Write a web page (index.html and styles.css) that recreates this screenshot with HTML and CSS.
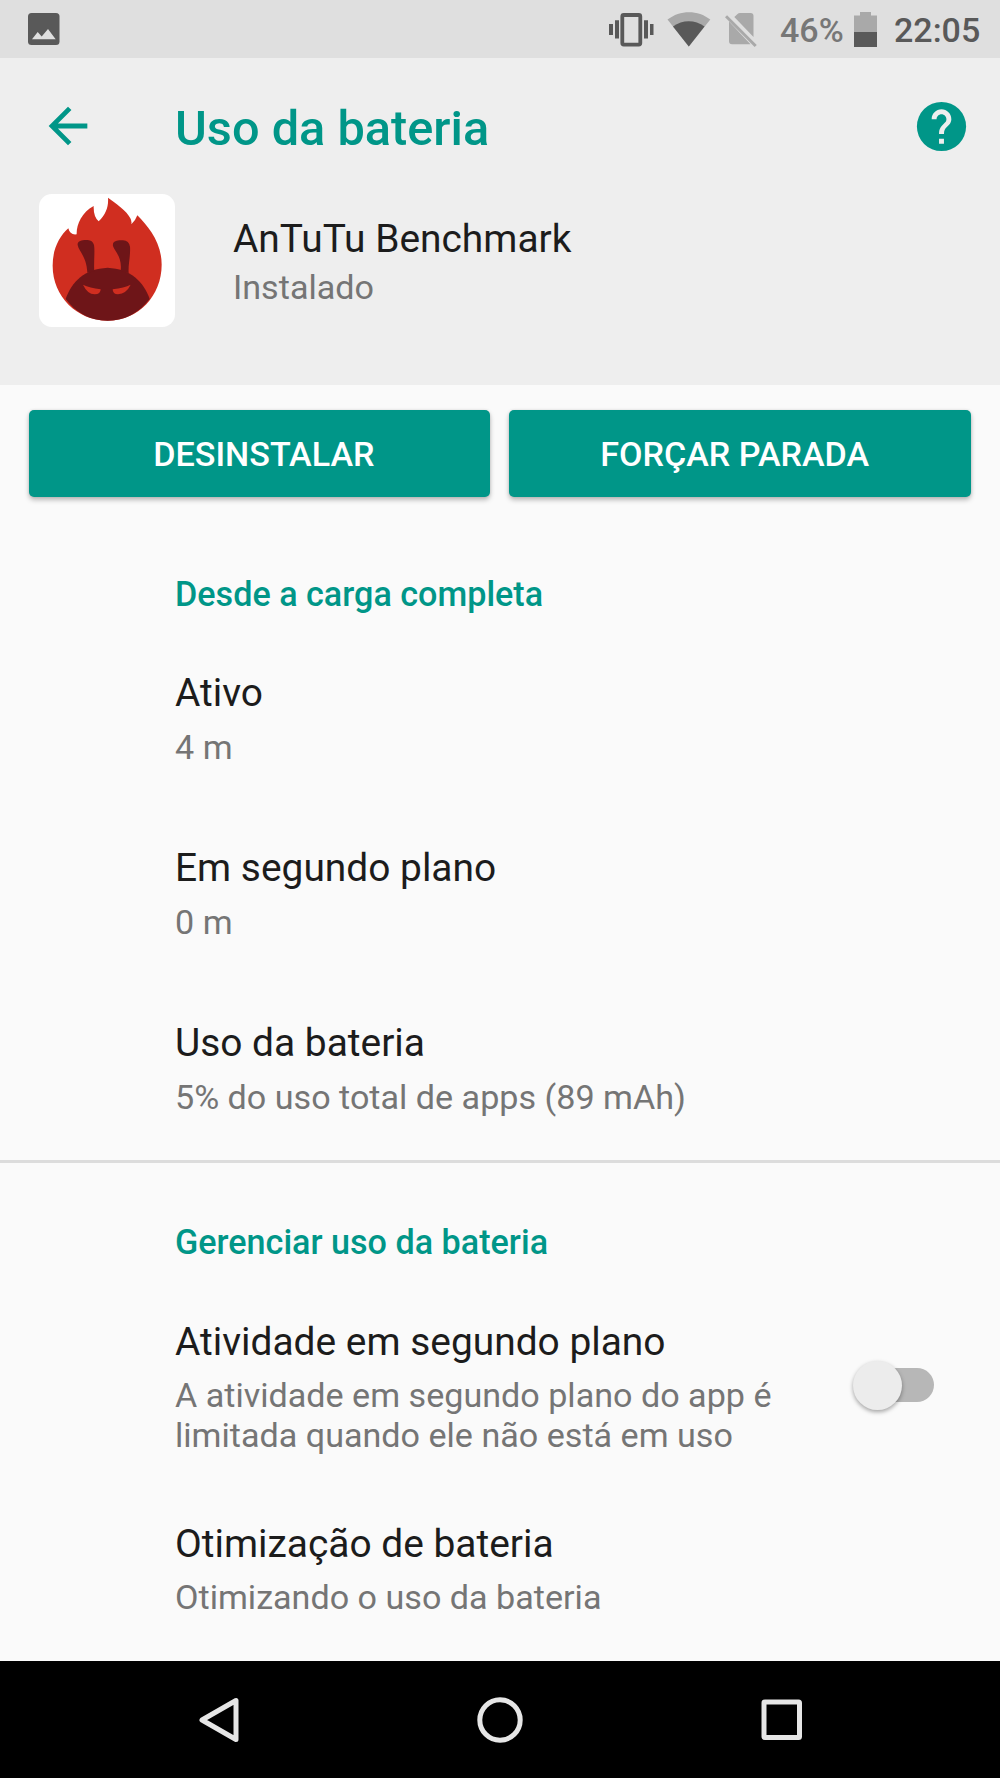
FILE: index.html
```html
<!DOCTYPE html>
<html lang="pt-BR">
<head>
  <meta charset="UTF-8">
  <meta name="viewport" content="width=device-width, initial-scale=1.0">
  <title>Uso da bateria</title>
  <link rel="stylesheet" href="styles.css">
</head>
<body>

  <div class="screen">

    <div class="status-bar">
      <svg class="status-picture" width="32" height="32" viewBox="0 0 32 32">
        <rect width="31.500" height="32" rx="3.500" fill="#595959"/>
        <path d="M4 26.300L9.700 19l4 4.600L20 16l7.700 10.300z" fill="#dfdfdf"/>
      </svg>
      <div class="status-icons">
        <svg class="status-vibrate" width="45" height="34" viewBox="0 0 45 34">
          <rect x="13.3" y="2" width="18" height="29.6" rx="1.5" fill="none" stroke="#595959" stroke-width="3.8"/>
          <path d="M0 11h4v11H0zM6 7.300h4v18.300H6zM35 7.300h4v18.300h-4zM41 11h3.500v11H41z" fill="#595959"/>
        </svg>
        <svg class="status-wifi" width="44" height="35" viewBox="0 0 44 35">
          <path d="M.5 7.500C13-2.300 31-2.300 43.300 7.500L21.800 34.500z" fill="#a9a9a9"/>
          <path d="M6 14.500C15.500 7.500 28 7.500 37.500 14.500L21.800 34.500z" fill="#595959"/>
        </svg>
        <!-- no sim: the gap beside the slash keeps the bar colour -->
        <svg class="status-sim" width="33" height="35" viewBox="0 0 33 35">
          <path d="M9.300 4L12.300 1.300Q13.500 0 15 0H25.500Q28.500 0 28.500 3V24zM4 8.500L25.500 31.300H7Q4 31.300 4 28.300z" fill="#a9a9a9"/>
          <path d="M1 3.200L30.700 33" stroke="#a9a9a9" stroke-width="3"/>
        </svg>
        <span class="status-percent">46%</span>
        <svg class="status-battery" width="23" height="35" viewBox="0 0 23 35">
          <path d="M0 3.500h6V0h11v3.500h6V20H0z" fill="#a9a9a9"/>
          <path d="M0 20h23v15H0z" fill="#595959"/>
        </svg>
        <span class="status-time">22:05</span>
      </div>
    </div>

    <div class="header">
      <div class="app-bar">
        <svg class="back" width="58" height="58" viewBox="0 0 24 24">
          <path d="M20 11H7.830l5.590-5.590L12 4l-8 8 8 8 1.410-1.410L7.830 13H20z" fill="#009688"/>
        </svg>
        <h1 class="app-bar-title">Uso da bateria</h1>
        <svg class="help" width="59" height="59" viewBox="0 0 24 24">
          <circle cx="12" cy="12" r="10" fill="#009688"/>
          <path d="M13 19h-2v-2h2zM15.070 11.250l-.9.920C13.450 12.900 13 13.500 13 15h-2v-.5c0-1.100.45-2.100 1.170-2.830l1.240-1.260c.37-.36.59-.86.59-1.410 0-1.100-.9-2-2-2s-2 .9-2 2H8c0-2.210 1.790-4 4-4s4 1.790 4 4c0 .88-.36 1.680-.93 2.250z" fill="#eee"/>
        </svg>
      </div>
      <div class="app-info">
        <svg class="app-logo" width="136" height="133" viewBox="0 0 408 399">
          <rect width="408" height="399" rx="38" fill="#fff"/>
          <g transform="translate(-2 0)">
            <path d="M209 11C229 26 267 51 276 73Q281 82 279 91Q291 81 297 64C330 98 370 145 370 212C370 305 300 380 208 380C115 380 42 305 43 214C43 165 63 127 90 103Q95 124 115 121C114 92 130 55 166 36Q165 68 181 82C203 61 211 38 209 11z" fill="#d02e20"/>
            <path d="M82 315C100 262 139 225 208 221C276 225 316 262 334 315C303 356 260 380 208 380C155 380 112 356 82 315z" fill="#6e1518"/>
            <path d="M147 236C145 187 121 172 118 153C116 139 138 137 152 139Q168 142 168 162C169 185 166 210 168 232zM247 230C252 188 229 173 224 156C221 139 241 138 254 139Q272 140 275 158C277 185 269 212 271 238z" fill="#6e1518"/>
            <path d="M134 272Q154 281 187 286Q187 301 169 301Q147 300 134 272zM277 272Q258 281 223 286Q223 301 239 301Q264 299 277 272z" fill="#d02e20"/>
          </g>
        </svg>
        <div class="app-text">
          <div class="item-title">AnTuTu Benchmark</div>
          <div class="item-summary">Instalado</div>
        </div>
      </div>
    </div>

    <div class="content">
      <div class="buttons">
        <button class="btn btn-uninstall">DESINSTALAR</button>
        <button class="btn btn-stop">FORÇAR PARADA</button>
      </div>

      <div class="section">
        <h2 class="section-title">Desde a carga completa</h2>
        <div class="item">
          <div class="item-title">Ativo</div>
          <div class="item-summary">4 m</div>
        </div>
        <div class="item">
          <div class="item-title">Em segundo plano</div>
          <div class="item-summary">0 m</div>
        </div>
        <div class="item">
          <div class="item-title">Uso da bateria</div>
          <div class="item-summary">5% do uso total de apps (89 mAh)</div>
        </div>
      </div>

      <div class="section section-manage">
        <h2 class="section-title">Gerenciar uso da bateria</h2>
        <div class="item item-with-switch">
          <div class="item-text">
            <div class="item-title">Atividade em segundo plano</div>
            <div class="item-summary">A atividade em segundo plano do app é limitada quando ele não está em uso</div>
          </div>
          <div class="switch"><div class="switch-thumb"></div></div>
        </div>
        <div class="item">
          <div class="item-title">Otimização de bateria</div>
          <div class="item-summary">Otimizando o uso da bateria</div>
        </div>
      </div>
    </div>

    <div class="nav-bar">
      <svg width="46" height="46" viewBox="0 0 46 46">
        <path d="M40 3.500v39L6 23z"/>
      </svg>
      <svg width="46" height="46" viewBox="0 0 46 46">
        <circle cx="23" cy="23" r="20.200"/>
      </svg>
      <svg width="46" height="46" viewBox="0 0 46 46">
        <rect x="5" y="5" width="35.500" height="35.500" rx="1"/>
      </svg>
    </div>

  </div>

</body>
</html>
```

FILE: styles.css
```css
* {
  box-sizing: border-box;
}
body {
  margin: 0;
  padding: 0;
  font-family: Roboto, sans-serif;
  background: #fafafa;
  color: #1c1c1c;
}
h1, h2 {
  margin: 0;
  font-weight: 500;
  color: #009688;
}
svg {
  display: block;
  flex-shrink: 0;
}

.screen {
  width: 1000px;
  height: 1778px;
  display: flex;
  flex-direction: column;
  overflow: hidden;
}

/* status bar */
.status-bar {
  height: 58px;
  flex-shrink: 0;
  display: flex;
  justify-content: space-between;
  align-items: center;
  padding: 0 19px 0 28px;
  background: #dfdfdf;
}
.status-icons {
  display: flex;
  align-items: center;
  font-size: 34px;
  font-weight: 500;
  line-height: 40px;
  color: #595959;
}
.status-vibrate {
  margin-top: 1px;
}
.status-wifi {
  margin-left: 13px;
}
.status-sim {
  margin-left: 14px;
  margin-top: 2px;
}
.status-percent {
  width: 64px;
  margin-left: 22px;
  margin-top: 2px;
  color: #777;
}
.status-battery {
  margin-left: 10px;
}
.status-time {
  width: 87px;
  margin-left: 17px;
  margin-top: 2px;
}

/* header */
.header {
  height: 327px;
  flex-shrink: 0;
  background: #eee;
}
.app-bar {
  height: 136px;
  display: flex;
  align-items: center;
  padding: 0 29px 0 39px;
}
.app-bar-title {
  flex: 1;
  margin-left: 78px;
  padding-top: 5px;
  font-size: 48.7px;
  line-height: 58px;
}
.app-info {
  display: flex;
  padding-left: 39px;
}
.app-text {
  padding-top: 22px;
  margin-left: 58px;
}
.app-text .item-summary {
  margin-top: 5px;
}

/* content */
.content {
  flex: 1;
}
.buttons {
  display: flex;
  gap: 19px;
  padding: 24.5px 29.5px 0 29px;
}
.btn {
  flex: 1;
  height: 87.5px;
  border: none;
  border-radius: 5px;
  background: #009688;
  box-shadow: 0 3px 5px rgba(0, 0, 0, 0.26), 0 0 3px rgba(0, 0, 0, 0.1);
  color: white;
  font-family: inherit;
  font-size: 34.1px;
  font-weight: 500;
  padding: 2px 0 0;
}
.btn-uninstall {
  padding-left: 9px;
}
.btn-stop {
  padding-right: 10px;
}
.section {
  padding: 77px 0 4px 175px;
}
.section-title {
  margin-bottom: 17px;
  font-size: 34.15px;
  line-height: 40px;
}
.section-manage {
  border-top: 3px solid #dcdcdc;
  padding-top: 59px;
}
.section-manage .section-title {
  margin-bottom: 18px;
}
.item {
  padding: 39px 0;
}
.item-title {
  font-size: 38.9px;
  line-height: 46px;
}
.item-summary {
  margin-top: 11px;
  font-size: 34.12px;
  line-height: 40px;
  color: #757575;
}
.section-manage .item-summary {
  margin-top: 10px;
}
.item-with-switch {
  display: flex;
  align-items: center;
  justify-content: space-between;
  padding-right: 66px;
  padding-bottom: 27px;
}
.item-text {
  width: 620px;
}

/* switch */
.switch {
  width: 70px;
  height: 34px;
  margin-bottom: 5px;
  border-radius: 17px;
  background: #b7b7b7;
}
.switch-thumb {
  width: 49px;
  height: 49px;
  margin: -7px 0 0 -11px;
  border-radius: 50%;
  background: #ececec;
  box-shadow: 0 2px 4px rgba(0, 0, 0, 0.35);
}

/* navigation bar */
.nav-bar {
  height: 117px;
  flex-shrink: 0;
  display: flex;
  align-items: center;
  justify-content: center;
  gap: 235.5px;
  background: black;
}
.nav-bar svg {
  fill: none;
  stroke: #e6e6e6;
  stroke-width: 5;
  stroke-linejoin: round;
}
```
